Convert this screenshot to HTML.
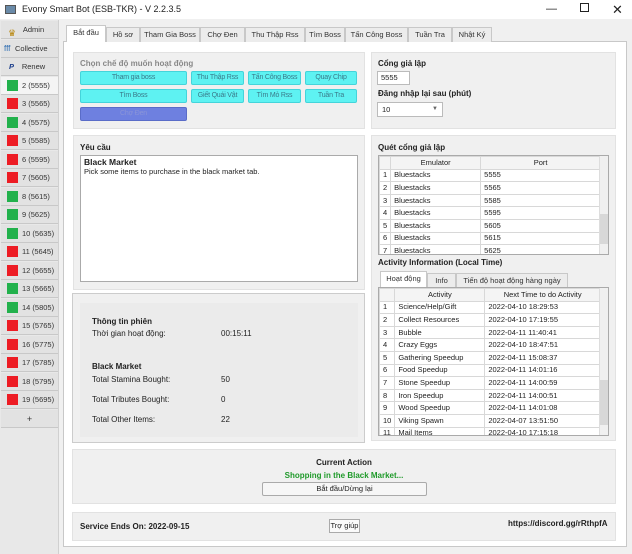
<!DOCTYPE html>
<html><head><meta charset="utf-8"><style>
*{box-sizing:border-box;margin:0;padding:0}
body{width:632px;height:554px;background:#f0f0f0;font-family:"Liberation Sans","DejaVu Sans",sans-serif;font-size:8px;color:#222;position:relative;overflow:hidden}
.a{position:absolute}
.title{left:0;top:0;width:632px;height:19px;background:#fff;font-size:9px;line-height:19px;padding-left:22px}
.side{left:0;top:20px;width:59px;height:534px;background:#e8e8e8;border-right:1px solid #d0d0d0}
.si{position:absolute;left:1px;width:57px;height:18px;background:#e2e2e2;border-bottom:1px solid #c8c8c8;font-size:7.5px;line-height:18px;color:#333}
.sq{position:absolute;left:6px;top:3px;width:11px;height:11px}
.g{background:#22b14c}.r{background:#ed1c24}
.tab{position:absolute;top:27px;height:15px;border:1px solid #c8c8c8;border-bottom:none;background:#ececec;font-size:7.5px;line-height:14px;text-align:center;color:#333;white-space:nowrap}
.panel{left:63px;top:41px;width:564px;height:506px;background:#fff;border:1px solid #c8c8c8}
.box{position:absolute;background:#f0f0f0;border:1px solid #e2e2e2}
.h{position:absolute;font-weight:bold;font-size:8px;color:#222}
.btn{position:absolute;height:14px;background:#5ef2f2;border:1px solid #44d4da;border-radius:2px;font-size:7px;line-height:12px;text-align:center;color:#3a7a8a;white-space:nowrap;overflow:hidden;letter-spacing:-0.2px}
table{border-collapse:collapse;font-size:7.5px}
td,th{border:1px solid #d8d8d8;height:12.6px;line-height:10px;padding:0 3px;white-space:nowrap;font-weight:normal;text-align:left}
th{background:#f4f4f4;text-align:center}
.tbl{position:absolute;background:#fff;border:1px solid #aaa;overflow:hidden}
.sb{position:absolute;right:0;top:0;width:9px;bottom:0;background:#f0f0f0;border-left:1px solid #ddd}
</style></head><body>
<div class="a title"><span class="a" style="left:5px;top:5px;width:11px;height:9px;background:#6a8aa8;border:1px solid #555"></span>Evony Smart Bot (ESB-TKR) - V 2.2.3.5
<span class="a" style="left:546px;top:0;font-size:11px">&#8212;</span>
<span class="a" style="left:580px;top:3px;width:9px;height:9px;border:1px solid #222"></span>
<span class="a" style="left:612px;top:0;font-size:13px">&#10005;</span></div>
<div class="a side">
<div class="si" style="top:1px;text-align:center;padding-left:8px"><span class="a" style="left:7px;top:3px;color:#b8860b;font-size:9px">&#9819;</span>Admin</div>
<div class="si" style="top:19.5px;padding-left:14px"><span class="a" style="left:3px;top:0;color:#2a6ab0;font-size:8px">fff</span>Collective</div>
<div class="si" style="top:38px;text-align:center;padding-left:8px"><span class="a" style="left:8px;top:0;color:#1a3c8a;font-weight:bold;font-style:italic">P</span>Renew</div>
<div class="si" style="top:56.5px;padding-left:21px;background:#f4f4f4"><span class="sq g"></span>2 (5555)</div>
<div class="si" style="top:75px;padding-left:21px"><span class="sq r"></span>3 (5565)</div>
<div class="si" style="top:93.5px;padding-left:21px"><span class="sq g"></span>4 (5575)</div>
<div class="si" style="top:112px;padding-left:21px"><span class="sq r"></span>5 (5585)</div>
<div class="si" style="top:130.5px;padding-left:21px"><span class="sq r"></span>6 (5595)</div>
<div class="si" style="top:149px;padding-left:21px"><span class="sq r"></span>7 (5605)</div>
<div class="si" style="top:167.5px;padding-left:21px"><span class="sq g"></span>8 (5615)</div>
<div class="si" style="top:186px;padding-left:21px"><span class="sq g"></span>9 (5625)</div>
<div class="si" style="top:204.5px;padding-left:21px"><span class="sq g"></span>10 (5635)</div>
<div class="si" style="top:223px;padding-left:21px"><span class="sq r"></span>11 (5645)</div>
<div class="si" style="top:241.5px;padding-left:21px"><span class="sq r"></span>12 (5655)</div>
<div class="si" style="top:260px;padding-left:21px"><span class="sq g"></span>13 (5665)</div>
<div class="si" style="top:278.5px;padding-left:21px"><span class="sq g"></span>14 (5805)</div>
<div class="si" style="top:297px;padding-left:21px"><span class="sq r"></span>15 (5765)</div>
<div class="si" style="top:315.5px;padding-left:21px"><span class="sq r"></span>16 (5775)</div>
<div class="si" style="top:334px;padding-left:21px"><span class="sq r"></span>17 (5785)</div>
<div class="si" style="top:352.5px;padding-left:21px"><span class="sq r"></span>18 (5795)</div>
<div class="si" style="top:371px;padding-left:21px"><span class="sq r"></span>19 (5695)</div>
<div class="si" style="top:389.5px;text-align:center;font-size:9px">+</div>
</div>
<div class="a panel"></div>
<div class="tab" style="left:66px;width:40px;background:#fff;top:25px;height:17px">Bắt đầu</div>
<div class="tab" style="left:106px;width:34px">Hồ sơ</div>
<div class="tab" style="left:140px;width:60px">Tham Gia Boss</div>
<div class="tab" style="left:200px;width:45px">Chợ Đen</div>
<div class="tab" style="left:245px;width:60px">Thu Thập Rss</div>
<div class="tab" style="left:305px;width:40px">Tìm Boss</div>
<div class="tab" style="left:345px;width:63px">Tấn Công Boss</div>
<div class="tab" style="left:408px;width:44px">Tuần Tra</div>
<div class="tab" style="left:452px;width:40px">Nhật Ký</div>

<div class="box" style="left:73px;top:52px;width:292px;height:77px"></div>
<div class="h" style="left:80px;top:59px;color:#888">Chọn chế độ muốn hoạt động</div>
<div class="btn" style="left:80px;top:71px;width:107px">Tham gia boss</div>
<div class="btn" style="left:191px;top:71px;width:53px">Thu Thập Rss</div>
<div class="btn" style="left:248px;top:71px;width:53px">Tấn Công Boss</div>
<div class="btn" style="left:305px;top:71px;width:52px">Quay Chip</div>
<div class="btn" style="left:80px;top:89px;width:107px">Tìm Boss</div>
<div class="btn" style="left:191px;top:89px;width:53px">Giết Quái Vật</div>
<div class="btn" style="left:248px;top:89px;width:53px">Tìm Mỏ Rss</div>
<div class="btn" style="left:305px;top:89px;width:52px">Tuần Tra</div>
<div class="btn" style="left:80px;top:107px;width:107px;background:#6e80e0;border-color:#5a6cc8;color:#8a94d8">Chợ Đen</div>

<div class="box" style="left:371px;top:52px;width:245px;height:77px"></div>
<div class="h" style="left:378px;top:59px">Cổng giả lập</div>
<div class="a" style="left:377px;top:71px;width:33px;height:14px;background:#fff;border:1px solid #bbb;font-size:7.5px;line-height:12px;padding-left:3px">5555</div>
<div class="h" style="left:378px;top:89px">Đăng nhập lại sau (phút)</div>
<div class="a" style="left:377px;top:102px;width:66px;height:15px;background:#fff;border:1px solid #bbb;font-size:7.5px;line-height:13px;padding-left:4px">10<span class="a" style="left:54px;top:0;font-size:6px;color:#666">&#9660;</span></div>

<div class="box" style="left:73px;top:135px;width:292px;height:155px"></div>
<div class="h" style="left:80px;top:143px">Yêu cầu</div>
<div class="a" style="left:80px;top:155px;width:278px;height:127px;background:#fff;border:1px solid #aaa;padding:2px 3px;font-size:7.5px;line-height:9px"><b style="font-size:8.5px">Black Market</b><br>Pick some items to purchase in the black market tab.</div>

<div class="box" style="left:371px;top:135px;width:245px;height:306px"></div>
<div class="h" style="left:378px;top:143px">Quét cổng giả lập</div>
<div class="tbl" style="left:378px;top:155px;width:231px;height:100px">
<table style="width:222px"><tr><th style="width:11px"></th><th style="width:90px">Emulator</th><th>Port</th></tr>
<tr><td>1</td><td>Bluestacks</td><td>5555</td></tr><tr><td>2</td><td>Bluestacks</td><td>5565</td></tr>
<tr><td>3</td><td>Bluestacks</td><td>5585</td></tr><tr><td>4</td><td>Bluestacks</td><td>5595</td></tr>
<tr><td>5</td><td>Bluestacks</td><td>5605</td></tr><tr><td>6</td><td>Bluestacks</td><td>5615</td></tr>
<tr><td>7</td><td>Bluestacks</td><td>5625</td></tr></table>
<div class="sb"><div class="a" style="left:0;top:58px;width:8px;height:30px;background:#d8d8d8"></div></div></div>
<div class="h" style="left:378px;top:258px">Activity Information (Local Time)</div>
<div class="tab" style="left:380px;top:271px;height:17px;width:47px;background:#fff">Hoạt động</div>
<div class="tab" style="left:427px;top:273px;width:29px">Info</div>
<div class="tab" style="left:456px;top:273px;width:112px">Tiến độ hoạt động hàng ngày</div>
<div class="tbl" style="left:378px;top:287px;width:231px;height:149px">
<table style="width:222px"><tr><th style="width:11px"></th><th style="width:90px">Activity</th><th>Next Time to do Activity</th></tr>
<tr><td>1</td><td>Science/Help/Gift</td><td>2022-04-10 18:29:53</td></tr>
<tr><td>2</td><td>Collect Resources</td><td>2022-04-10 17:19:55</td></tr>
<tr><td>3</td><td>Bubble</td><td>2022-04-11 11:40:41</td></tr>
<tr><td>4</td><td>Crazy Eggs</td><td>2022-04-10 18:47:51</td></tr>
<tr><td>5</td><td>Gathering Speedup</td><td>2022-04-11 15:08:37</td></tr>
<tr><td>6</td><td>Food Speedup</td><td>2022-04-11 14:01:16</td></tr>
<tr><td>7</td><td>Stone Speedup</td><td>2022-04-11 14:00:59</td></tr>
<tr><td>8</td><td>Iron Speedup</td><td>2022-04-11 14:00:51</td></tr>
<tr><td>9</td><td>Wood Speedup</td><td>2022-04-11 14:01:08</td></tr>
<tr><td>10</td><td>Viking Spawn</td><td>2022-04-07 13:51:50</td></tr>
<tr><td>11</td><td>Mail Items</td><td>2022-04-10 17:15:18</td></tr></table>
<div class="sb"><div class="a" style="left:0;top:92px;width:8px;height:45px;background:#d8d8d8"></div></div></div>

<div class="box" style="left:72px;top:293px;width:293px;height:150px;border-color:#ccc"></div>
<div class="a" style="left:80px;top:303px;width:278px;height:134px;background:#ebebeb"></div>
<div class="h" style="left:92px;top:317px">Thông tin phiên</div>
<div class="a" style="left:92px;top:329px">Thời gian hoạt động:</div>
<div class="a" style="left:221px;top:329px">00:15:11</div>
<div class="h" style="left:92px;top:362px">Black Market</div>
<div class="a" style="left:92px;top:375px">Total Stamina Bought:</div><div class="a" style="left:221px;top:375px">50</div>
<div class="a" style="left:92px;top:395px">Total Tributes Bought:</div><div class="a" style="left:221px;top:395px">0</div>
<div class="a" style="left:92px;top:415px">Total Other Items:</div><div class="a" style="left:221px;top:415px">22</div>

<div class="box" style="left:72px;top:449px;width:544px;height:55px"></div>
<div class="h" style="left:72px;width:544px;text-align:center;top:458px">Current Action</div>
<div class="h" style="left:72px;width:544px;text-align:center;top:471px;color:#1f9a2a">Shopping in the Black Market...</div>
<div class="a" style="left:262px;top:482px;width:165px;height:14px;background:#f6f6f6;border:1px solid #aaa;border-radius:2px;text-align:center;line-height:12px;font-size:7.5px">Bắt đầu/Dừng lại</div>

<div class="box" style="left:72px;top:512px;width:544px;height:29px"></div>
<div class="h" style="left:80px;top:522px">Service Ends On: 2022-09-15</div>
<div class="a" style="left:329px;top:519px;width:31px;height:14px;background:#fafafa;border:1px solid #aaa;text-align:center;line-height:12px;font-size:7.5px">Trợ giúp</div>
<div class="h" style="left:508px;top:519px">https://discord.gg/rRthpfA</div>
</body></html>
